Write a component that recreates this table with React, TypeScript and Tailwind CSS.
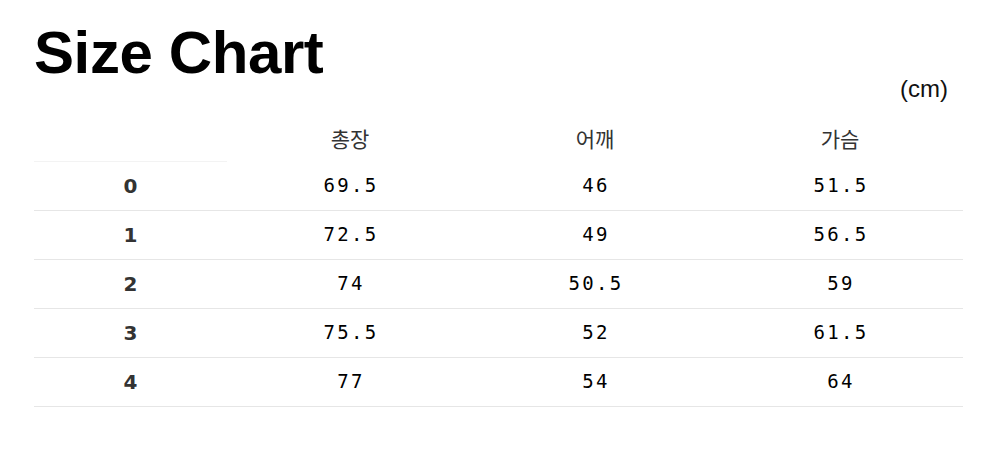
import React from 'react';

const HEADERS = ['총장', '어깨', '가슴'];

const ROWS: { size: string; values: string[] }[] = [
  { size: '0', values: ['69.5', '46', '51.5'] },
  { size: '1', values: ['72.5', '49', '56.5'] },
  { size: '2', values: ['74', '50.5', '59'] },
  { size: '3', values: ['75.5', '52', '61.5'] },
  { size: '4', values: ['77', '54', '64'] },
];

const App: React.FC = () => {
  return (
    <div className="min-h-[450px] w-full bg-white pl-[34px] pr-[25px] pt-[23px]">
      <div className="flex justify-between">
        <h1 className="font-['Liberation_Sans',Arial,sans-serif] text-[60px] font-bold leading-[60px] tracking-[-0.4px] text-black">
          Size Chart
        </h1>
        <span className="pr-[15px] pt-[54px] font-['Liberation_Sans',Arial,sans-serif] text-[24px] leading-[24px] text-[#111]">
          (cm)
        </span>
      </div>

      <table className="mt-[15px] w-full table-fixed">
        <colgroup>
          <col className="w-[193px]" />
          <col className="w-[246px]" />
          <col className="w-[244px]" />
          <col />
        </colgroup>
        <thead>
          <tr className="h-[45px]">
            <th className="border-b border-[#f3f3f3]" />
            {HEADERS.map(h => (
              <th
                key={h}
                className="text-center font-['Noto_Sans_CJK_KR',sans-serif] text-[21px] font-normal text-[#333]"
              >
                {h}
              </th>
            ))}
          </tr>
        </thead>
        <tbody>
          {ROWS.map(row => (
            <tr key={row.size} className="h-[49px] border-b border-[#e6e6e6]">
              <td className="text-center font-['DejaVu_Sans',Verdana,sans-serif] text-[20px] font-bold text-[#333]">
                {row.size}
              </td>
              {row.values.map((v, i) => (
                <td
                  key={i}
                  className="pl-[2px] text-center font-['DejaVu_Sans_Mono',monospace] text-[19px] tracking-[2.3px] text-black"
                >
                  {v}
                </td>
              ))}
            </tr>
          ))}
        </tbody>
      </table>
    </div>
  );
};

export default App;
